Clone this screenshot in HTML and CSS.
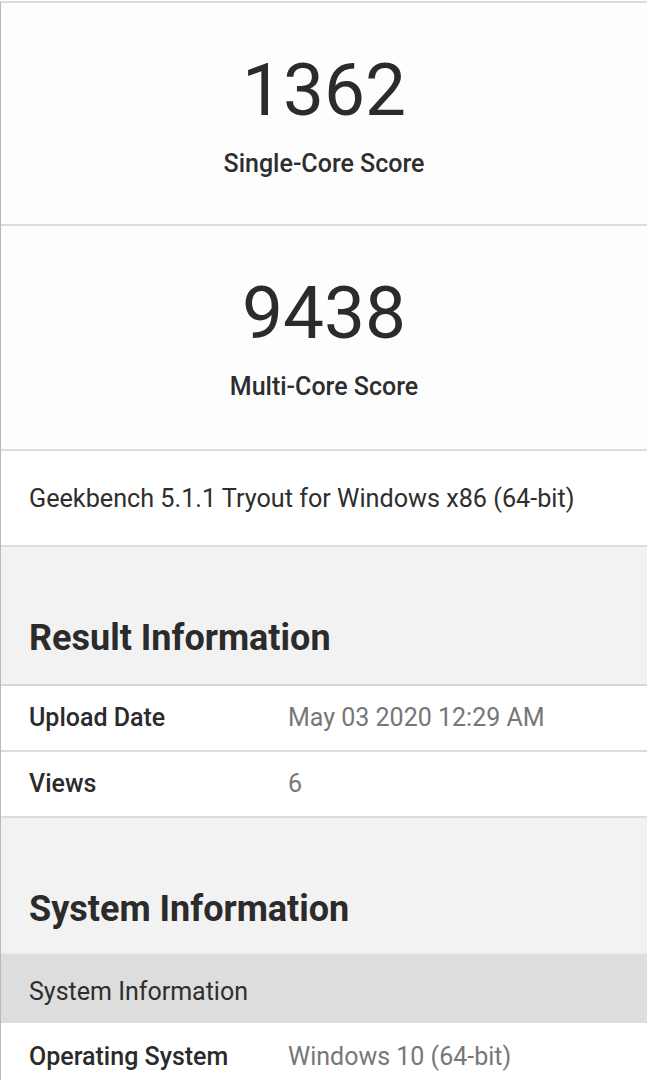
FILE: index.html
```html
<!DOCTYPE html>
<html lang="en">
<head>
<meta charset="utf-8">
<title>Geekbench Result</title>
<link rel="stylesheet" href="styles.css">
</head>
<body>
<main class="page">
  <section class="score-box">
    <div class="score">1362</div>
    <div class="score-label">Single-Core Score</div>
  </section>
  <section class="score-box multi">
    <div class="score">9438</div>
    <div class="score-label">Multi-Core Score</div>
  </section>
  <div class="version">Geekbench 5.1.1 Tryout for Windows x86 (64-bit)</div>

  <div class="section-head"><h2>Result Information</h2></div>
  <div class="table">
    <div class="row">
      <div class="key">Upload Date</div>
      <div class="val">May 03 2020 12:29 AM</div>
    </div>
    <div class="row">
      <div class="key">Views</div>
      <div class="val">6</div>
    </div>
  </div>

  <div class="section-head sys"><h2>System Information</h2></div>
  <div class="table">
    <div class="table-head">System Information</div>
    <div class="row first">
      <div class="key">Operating System</div>
      <div class="val">Windows 10 (64-bit)</div>
    </div>
  </div>
</main>
</body>
</html>
```

FILE: styles.css
```css
html, body {
  margin: 0;
  padding: 0;
  background: #ffffff;
}
body {
  font-family: Roboto, "Liberation Sans", sans-serif;
  color: #2e2e2e;
  overflow: hidden;
}
.page {
  margin-top: 1px;
  border-top: 2px solid #dcdcdc;
  border-left: 1px solid #b9b9b9;
  background: #fdfdfd;
}
.score-box {
  padding: 43px 0 46px;
  text-align: center;
  border-bottom: 2px solid #dcdcdc;
}
.score-box.multi {
  padding-bottom: 48px;
}
.score {
  font-size: 73px;
  line-height: 88px;
  font-weight: 400;
  color: #2b2b2b;
}
.score-label {
  margin-top: 15px;
  font-size: 25px;
  line-height: 29px;
  font-weight: 500;
  color: #2e2e2e;
}
.version {
  padding: 33px 28px 32px;
  font-size: 25.2px;
  line-height: 29px;
  background: #ffffff;
  border-bottom: 2px solid #dcdcdc;
}
.section-head {
  background: #f2f2f2;
  padding: 70px 28px 25px;
}
.section-head h2 {
  margin: 0;
  font-size: 36px;
  line-height: 42px;
  font-weight: 700;
  color: #2b2b2b;
}
.section-head.sys {
  padding-bottom: 23px;
  border-bottom: 2px solid #e4e4e4;
}
.table {
  border-top: 2px solid #d8d8d8;
  background: #ffffff;
}
.section-head.sys + .table {
  border-top: none;
}
.row {
  display: grid;
  grid-template-columns: 259px 1fr;
  padding: 17px 28px 18px;
  font-size: 25px;
  line-height: 29px;
  border-bottom: 2px solid #dcdcdc;
}
.row.first {
  padding-top: 19px;
}
.key {
  font-weight: 500;
  color: #2b2b2b;
}
.val {
  color: #777777;
}
.table-head {
  background: #dddddd;
  padding: 22px 28px 17px;
  font-size: 25px;
  line-height: 29px;
  color: #2e2e2e;
}
```
